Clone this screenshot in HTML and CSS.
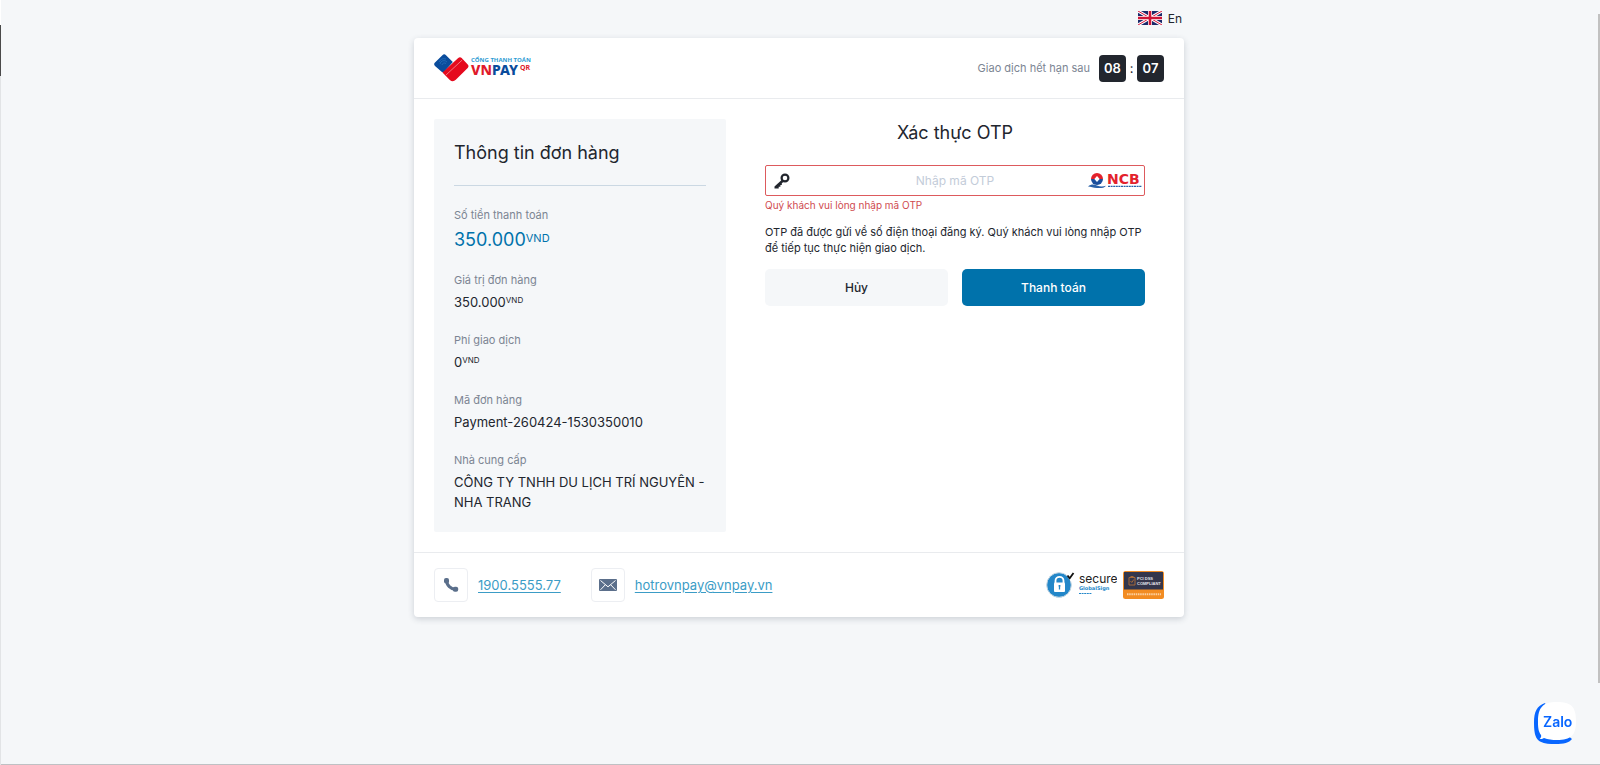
FILE: index.html
```
<!DOCTYPE html>
<html lang="vi">
<head>
  <meta charset="UTF-8">
  <meta name="viewport" content="width=device-width, initial-scale=1">
  <title>Cổng thanh toán VNPAY-QR</title>
  <link rel="stylesheet" href="styles.css">
</head>
<body>
<div class="edge-left"></div>
<div class="scroll-thumb"></div>

<div class="container">
  <div class="language">
    <a href="#" class="language-link">
      <svg class="flag" viewBox="0 0 24 14" aria-hidden="true">
        <rect width="24" height="14" fill="#1b2a6b"/>
        <path d="M0 0l24 14M24 0L0 14" stroke="#fff" stroke-width="3"/>
        <path d="M0 0l24 14M24 0L0 14" stroke="#d8173c" stroke-width="1"/>
        <path d="M12 0v14M0 7h24" stroke="#fff" stroke-width="4"/>
        <path d="M12 0v14M0 7h24" stroke="#cf1436" stroke-width="2.600"/>
      </svg>
      <span>En</span>
    </a>
  </div>

  <div class="card">
    <!-- header -->
    <header class="card-header">
      <a href="#" class="logo">
        <svg width="98" height="28" viewBox="0 0 98 28" role="img" aria-label="VNPAY QR">
          <path d="M1 8.600L8.400 1.200a2.600 2.600 0 0 1 3.600 0l6.800 6.900-8.600 9.700a2 2 0 0 1-2.600 0L1 12a2.400 2.400 0 0 1 0-3.400z" fill="#0a4c9c"/>
          <path d="M6 10a4 4 0 0 1 7-2M8 11a2.500 2.500 0 0 1 4-1.500M5 8a6 6 0 0 1 7-3" fill="none" stroke="#2f7cc4" stroke-width=".6"/>
          <path d="M8.500 18.400L24.200 4.100a2.500 2.500 0 0 1 3.500 0l6 6.500a2.500 2.500 0 0 1 0 3.400L21.800 25.700a4.500 4.500 0 0 1-6 .2z" fill="#e50a1e"/>
          <path d="M12 21L28.200 6" stroke="#f7a0a6" stroke-width=".7"/>
          <text x="37" y="8" class="logo-top">CỔNG THANH TOÁN</text>
          <text x="37" y="21" class="logo-main"><tspan fill="#e01a2b">VN</tspan><tspan fill="#0a4c9c">PAY</tspan></text>
          <text x="86" y="16" class="logo-qr">QR</text>
        </svg>
      </a>
      <div class="countdown">
        <span class="countdown-label">Giao dịch hết hạn sau</span>
        <span class="countdown-box">08</span>
        <span class="countdown-sep">:</span>
        <span class="countdown-box">07</span>
      </div>
    </header>

    <!-- content -->
    <main class="card-body">
      <section class="order">
        <h1 class="title">Thông tin đơn hàng</h1>
        <dl class="order-list">
          <div class="order-item">
            <dt>Số tiền thanh toán</dt>
            <dd class="total">350.000<sup>VND</sup></dd>
          </div>
          <div class="order-item">
            <dt>Giá trị đơn hàng</dt>
            <dd>350.000<sup>VND</sup></dd>
          </div>
          <div class="order-item">
            <dt>Phí giao dịch</dt>
            <dd>0<sup>VND</sup></dd>
          </div>
          <div class="order-item">
            <dt>Mã đơn hàng</dt>
            <dd>Payment-260424-1530350010</dd>
          </div>
          <div class="order-item">
            <dt>Nhà cung cấp</dt>
            <dd>CÔNG TY TNHH DU LỊCH TRÍ NGUYÊN - NHA TRANG</dd>
          </div>
        </dl>
      </section>

      <form class="otp">
        <h2 class="title otp-title">Xác thực OTP</h2>
        <div class="otp-field">
          <label for="otp" aria-label="Mã OTP">
            <svg class="icon-key" viewBox="0 0 16 16" aria-hidden="true">
              <circle cx="11" cy="5" r="3.400" fill="none" stroke="#22262e" stroke-width="2.200"/>
              <path d="M8.200 6.400L.5 13.500v2h4.200v-1.800h1.700V12h1.400V10.300L10 8.600z" fill="#22262e"/>
            </svg>
          </label>
          <input type="text" id="otp" name="otp" class="otp-input" placeholder="Nhập mã OTP" autocomplete="off">
          <svg class="bank-logo" viewBox="0 0 54 17" role="img" aria-label="NCB">
            <path d="M0 14.500c3-2.500 6-2.500 9-1 3 1.300 6 1.300 9 .2-2 2.300-5 2.600-9 2.300-4-.3-6-1.500-9-1.500z" fill="#2a62a8"/>
            <path d="M3 7a6 6 0 0 1 12 0z" fill="#e3222c"/>
            <path d="M3 7a6 6 0 0 0 12 0z" fill="#1a4f9c"/>
            <path d="M9 4l2.600 3L9 10 6.400 7z" fill="#fff"/>
            <text x="19" y="12" class="bank-name">NCB</text>
            <path d="M20 14.300h34" stroke="#2a62a8" stroke-width="1.300" stroke-dasharray="2 .6"/>
          </svg>
        </div>
        <p class="otp-error">Quý khách vui lòng nhập mã OTP</p>
        <p class="otp-note">OTP đã được gửi về số điện thoại đăng ký. Quý khách vui lòng nhập OTP để tiếp tục thực hiện giao dịch.</p>
        <div class="otp-actions">
          <button type="button" class="btn btn-cancel">Hủy</button>
          <button type="submit" class="btn btn-pay">Thanh toán</button>
        </div>
      </form>
    </main>

    <!-- footer -->
    <footer class="card-footer">
      <div class="contact">
        <span class="contact-icon">
          <svg width="16" height="16" viewBox="0 0 16 16" aria-hidden="true">
            <path d="M3.800 3.500c-.6 4.500 4.200 9 9 9" fill="none" stroke="#5b6f8b" stroke-width="3"/>
            <rect x="1" y="1" width="5" height="5.400" rx="2" fill="#5b6f8b"/>
            <rect x="9.800" y="9.800" width="5.400" height="5" rx="2" fill="#5b6f8b"/>
          </svg>
        </span>
        <a href="tel:1900555577">1900.5555.77</a>
      </div>
      <div class="contact">
        <span class="contact-icon">
          <svg width="18" height="12" viewBox="0 0 18 12" aria-hidden="true">
            <rect width="18" height="12" rx="1" fill="#5b6f8b"/>
            <path d="M1.500 1.500L9 7.800l7.500-6.300M1.500 10.800l4.800-5M16.500 10.800l-4.800-5" fill="none" stroke="#fff" stroke-width="1"/>
          </svg>
        </span>
        <a href="mailto:hotrovnpay@vnpay.vn">hotrovnpay@vnpay.vn</a>
      </div>
      <div class="badges">
        <svg width="71" height="28" viewBox="0 0 71 28" role="img" aria-label="Secure GlobalSign">
          <circle cx="13" cy="14" r="12.300" fill="#2387c9" stroke="#c5d6e2" stroke-width="1"/>
          <path d="M19 0h9v10h-3.500z" fill="#fff"/>
          <path d="M21.500 4.500l2.200 2.800L27.500 2" fill="none" stroke="#111" stroke-width="1.800"/>
          <path d="M9.500 12V9.800a4 4 0 0 1 8 0V12" fill="none" stroke="#fff" stroke-width="1.800"/>
          <rect x="8" y="11.500" width="11" height="9.500" rx="1" fill="#fff"/>
          <path d="M13.500 14v4.500M12.500 14.800h2" stroke="#2387c9" stroke-width="1.300"/>
          <text x="33" y="12" class="secure-top">secure</text>
          <text x="33" y="19" class="secure-name">GlobalSign</text>
          <path d="M33 22.500h13" stroke="#2387c9" stroke-width="1.200" stroke-dasharray="2 .6"/>
        </svg>
        <svg width="41" height="28" viewBox="0 0 41 28" role="img" aria-label="PCI DSS Compliant">
          <rect width="41" height="28" rx="2.500" fill="#f28c22"/>
          <path d="M1 1h39v17.500H1z" fill="#34364b"/>
          <path d="M6 6.500h6v7.500H6zM7.500 5.500h3M7.500 10l1.300 1.500 2-3" fill="none" stroke="#a5693a" stroke-width="1"/>
          <text x="14" y="9" class="pci">PCI DSS</text>
          <text x="14" y="14" class="pci">COMPLIANT</text>
          <path d="M4 23.200h34" stroke="#fbd0a0" stroke-width="2" stroke-dasharray="1.500 .7"/>
        </svg>
      </div>
    </footer>
  </div>
</div>

<a href="#" class="zalo" aria-label="Zalo">
  <svg width="44" height="44" viewBox="0 0 44 44" aria-hidden="true">
    <path d="M12 2C4 5 1 10 1 22s2 16 6 18.500C12 43 17 43 22 43c9 0 14-1 17-5L22 24z" fill="#0866ff"/>
    <path d="M24 1c14 0 19 4.500 19 19s-5 19-19 19c-5 0-9-.5-13-2-1.500 1-2.500 1-4.300 1C8 36.500 8.500 35.500 8 34 5.500 30.500 5 27 5 21 5 6 10 1 24 1z" fill="#fff"/>
    <text x="10" y="26" class="zalo-text">Zalo</text>
  </svg>
</a>
</body>
</html>
```
FILE: styles.css
```
* {
  margin: 0;
  padding: 0;
  box-sizing: border-box;
}

body {
  min-height: 100vh;
  padding-right: 2px;
  background: #f5f7f9;
  border-bottom: 1px solid #bfc1c4;
  font-family: Inter, "Noto Sans", sans-serif;
  font-size: 11px;
  color: #22262e;
}

/* window edges */
.edge-left {
  position: absolute;
  left: 0;
  top: 0;
  width: 1px;
  height: 100%;
  background: linear-gradient(#fff 25px, #4a4a4a 25px, #4a4a4a 76px, #e2e4e6 76px);
}

.scroll-thumb {
  position: absolute;
  right: 0;
  top: 14px;
  bottom: 82px;
  width: 2px;
  background: #c1c1c1;
}

.container {
  max-width: 770px;
  margin: 0 auto;
}

.language {
  display: flex;
  justify-content: flex-end;
  height: 38px;
  padding-right: 2px;
}

.language-link {
  display: flex;
  align-items: center;
  gap: 6px;
  height: 36px;
  font-size: 12px;
  color: #22262e;
  text-decoration: none;
}

.flag {
  width: 24px;
  height: 14px;
}

.card {
  background: #fff;
  border-radius: 4px;
  box-shadow: 0 2px 6px rgba(40, 55, 75, .2);
}

.card-header {
  display: flex;
  justify-content: space-between;
  align-items: center;
  height: 61px;
  padding: 0 20px;
  border-bottom: 1px solid #e9ebee;
}

.logo svg {
  display: block;
}

.logo-top {
  font: 700 6px "Open Sans", sans-serif;
  fill: #2d9bd3;
}

.logo-main {
  font: 800 14px "Noto Sans", sans-serif;
}

.logo-qr {
  font: 700 7px "Noto Sans", sans-serif;
  fill: #e01a2b;
}

.countdown {
  display: flex;
  align-items: center;
}

.countdown-label {
  margin-right: 9px;
  color: #7c8593;
}

.countdown-box {
  width: 27px;
  line-height: 27px;
  border-radius: 4px;
  background: #22262e;
  color: #fff;
  font-size: 13px;
  font-weight: 600;
  text-align: center;
}

.countdown-sep {
  width: 11px;
  font-size: 13px;
  text-align: center;
}

.card-body {
  display: grid;
  grid-template-columns: 2fr 3fr;
  padding: 20px;
}

.order {
  padding: 20px;
  border-radius: 2px;
  background: #f5f7f9;
}

.title {
  font-size: 18px;
  font-weight: 400;
  line-height: 28px;
}

.order-list {
  margin-top: 18px;
  padding-top: 19px;
  border-top: 1px solid #cbd8e3;
  display: flex;
  flex-direction: column;
  gap: 18px;
}

.order-item dt {
  margin-bottom: 2px;
  line-height: 20px;
  color: #7c8593;
}

.order-item dd {
  font-size: 13px;
  line-height: 20px;
}

.order-item sup {
  font-size: 8px;
  line-height: 0;
  vertical-align: 4px;
}

.order-item .total {
  font-size: 18px;
  line-height: 25px;
  color: #0072ab;
}

.order-item .total sup {
  font-size: 11px;
}

.otp {
  padding: 0 19px 0 39px;
}

.otp-title {
  margin-bottom: 18px;
  text-align: center;
}

.otp-field {
  display: flex;
  align-items: center;
  height: 31px;
  padding: 0 2px 0 8px;
  border: 1px solid #dd5a5d;
  border-radius: 2px;
}

.icon-key {
  display: block;
  width: 16px;
  height: 16px;
}

.otp-input {
  flex: 1;
  min-width: 0;
  height: 100%;
  padding-left: 32px;
  border: 0;
  outline: 0;
  background: none;
  font: 12px Inter, "Noto Sans", sans-serif;
  text-align: center;
}

.otp-input::placeholder {
  color: #c3ccd9;
}

.bank-logo {
  width: 54px;
  height: 17px;
}

.bank-name {
  font: 700 14px "DejaVu Sans", sans-serif;
  fill: #e3222c;
}

.otp-error {
  margin-top: 2px;
  font-size: 10px;
  line-height: 14px;
  color: #cf4b50;
}

.otp-note {
  margin-top: 12px;
  line-height: 16px;
}

.otp-actions {
  display: grid;
  grid-template-columns: 1fr 1fr;
  gap: 14px;
  margin-top: 13px;
}

.btn {
  height: 37px;
  border: 0;
  border-radius: 5px;
  font: 500 12px Inter, "Noto Sans", sans-serif;
  cursor: pointer;
}

.btn-cancel {
  background: #f5f7f9;
  color: #22262e;
}

.btn-pay {
  background: #0072ab;
  color: #fff;
}

.card-footer {
  display: flex;
  align-items: center;
  gap: 30px;
  padding: 15px 20px;
  border-top: 1px solid #e9ebee;
}

.contact {
  display: flex;
  align-items: center;
  gap: 10px;
  font-size: 13px;
}

.contact a {
  color: #3b9cc6;
  text-underline-offset: 2px;
}

.contact-icon {
  display: flex;
  align-items: center;
  justify-content: center;
  width: 34px;
  height: 34px;
  border: 1px solid #eceef2;
  border-radius: 4px;
}

.badges {
  display: flex;
  gap: 6px;
  margin-left: auto;
}

.secure-top {
  font: 12px Inter, sans-serif;
  fill: #222;
}

.secure-name {
  font: 700 5px "DejaVu Sans", sans-serif;
  fill: #2387c9;
}

.pci {
  font: 700 4px "Liberation Sans", sans-serif;
  fill: #e4e4ea;
}

.zalo {
  position: fixed;
  right: 23px;
  bottom: 20px;
}

.zalo svg {
  display: block;
}

.zalo-text {
  font: 600 14px Inter, sans-serif;
  fill: #0866ff;
}
```
